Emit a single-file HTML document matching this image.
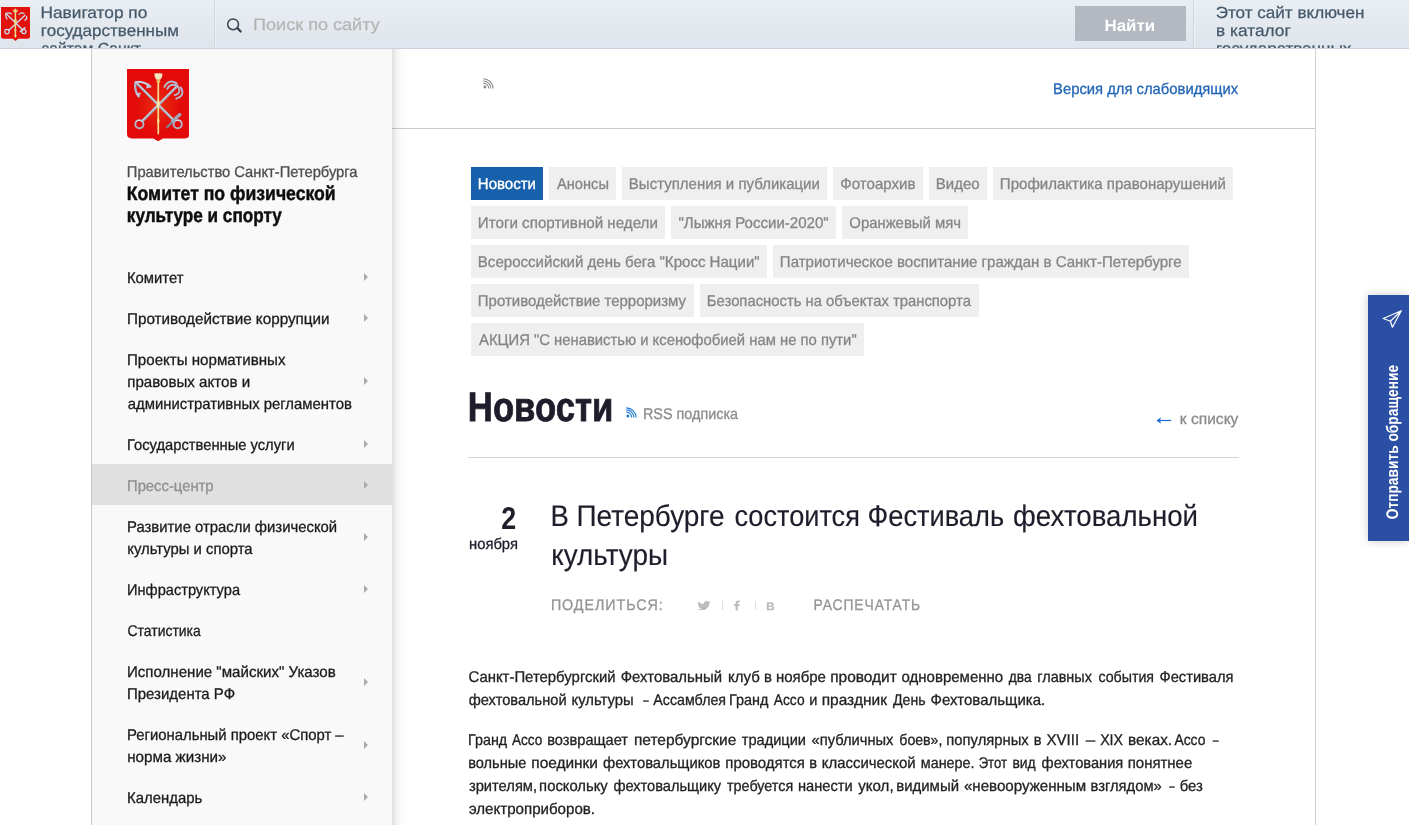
<!DOCTYPE html>
<html lang="ru">
<head>
<meta charset="utf-8">
<title>Новости</title>
<style>
*{box-sizing:border-box;margin:0;padding:0}
html,body{width:1409px;height:825px;overflow:hidden;background:#fff;font-family:"Liberation Sans",sans-serif}
.abs{position:absolute}
.t{position:absolute;left:0;top:0;text-rendering:geometricPrecision;white-space:nowrap;transform-origin:0 0;display:block}
#top{position:absolute;left:0;top:0;width:1409px;height:49px;background:linear-gradient(#e9eef3,#dfe5ec);border-bottom:1px solid #cbd3dc;overflow:hidden;z-index:6}
#top .sep{position:absolute;top:0;width:2px;height:48px;background:linear-gradient(90deg,#d0d7df 50%,#edf1f5 50%)}
#top .btn{position:absolute;left:1075px;top:6px;width:111px;height:35px;background:#b4b9c1}
#side{position:absolute;left:91px;top:48px;width:301px;height:777px;background:#f9f9f9;border-left:1px solid #c9c9c9;z-index:3}
#sideshadow{position:absolute;left:392px;top:48px;width:14px;height:777px;background:linear-gradient(90deg,rgba(0,0,0,.118),rgba(0,0,0,.09) 14%,rgba(0,0,0,.06) 28%,rgba(0,0,0,.04) 43%,rgba(0,0,0,.02) 64%,rgba(0,0,0,.008) 86%,rgba(0,0,0,0));z-index:2}
#sidetext{position:absolute;left:0;top:0;width:1409px;height:825px;z-index:4;will-change:transform}
.lay{position:absolute;left:0;top:0;width:1409px;height:825px;will-change:transform}
#act{position:absolute;left:0;top:416px;width:300px;height:41px;background:#e0e0e0}
.ar{position:absolute;left:272px;width:0;height:0;border-left:4px solid #ababab;border-top:4px solid transparent;border-bottom:4px solid transparent}
#vline{position:absolute;left:1315px;top:48px;width:1px;height:777px;background:#d2d2d2}
#hline{position:absolute;left:392px;top:128px;width:923px;height:1px;background:#cacaca}
.tag{position:absolute;height:33px;background:#efefef}
.tag.on{background:#1760ac}
</style>
</head>
<body>
<svg width="0" height="0" style="position:absolute">
  <defs>
    <radialGradient id="rg" cx="50%" cy="50%" r="36%"><stop offset="0" stop-color="#e92f10"/><stop offset="1" stop-color="#e20b0a"/></radialGradient>
    

  </defs>
</svg>

<div id="top">
  <svg class="abs" style="left:1.100px;top:7px;filter:drop-shadow(0 0 .6px rgba(255,255,255,.9))" width="29" height="34" viewBox="0 0 29 34">
      <path d="M0 0H29V29.800Q29 31.800 26.800 31.800H17.200L14.500 33.900L11.800 31.800H2.200Q0 31.800 0 29.800Z" fill="#e3110c"/>
      <g fill="none" stroke="#c6e2f6" stroke-linecap="round">
        <path d="M5.200 6.800L21.500 22.800M24 8.300L7.800 23.200" stroke-width="1.300"/>
        <circle cx="23" cy="24.600" r="2.100" stroke-width="1.200"/>
        <circle cx="6" cy="24.600" r="2.200" stroke-width="1.200"/>
        <path d="M6 12Q4 8.500 5 6.300Q8 5.300 10.500 7" stroke-width="1.200"/>
        <path d="M18 7.500Q20 5 23 6.500M25.500 9.500Q26.500 12 23.800 13.300" stroke-width="1.200"/>
        <path d="M19.300 24.500L23.800 20.800" stroke-width="1.500"/>
      </g>
      <path d="M14.400 2.200V30" stroke="#e7d98a" stroke-width="1.500" stroke-linecap="round"/>
      <path d="M14.400 10l1.500 4.300l-1.500 4.300l-1.500-4.300zM14.400 20.500l1.100 2.800l-1.100 2.800l-1.100-2.800zM12.800 28.300h3.200l-1.600 2.200z" fill="#e7d98a"/>
      <path d="M12 2.800l.9 2.300h3l.9-2.300l-1.300.9l-1.100-1.600l-1.100 1.600z" fill="#e7d98a" stroke="#e7d98a" stroke-width=".5"/>
    </svg>
  <div class="sep" style="left:214px"></div>
  <svg class="abs" style="left:225px;top:16px" width="20" height="18" viewBox="0 0 20 18"><circle cx="8.100" cy="8.300" r="5.400" fill="none" stroke="#3c434e" stroke-width="1.500"/><path d="M12.600 12.300L15.600 15.500" stroke="#3c434e" stroke-width="2.300" stroke-linecap="round"/></svg>
  <div class="btn"></div>
  <div class="sep" style="left:1193px"></div>
<div class="lay">
<span class="t" style="font-size:16.3px;line-height:23px;color:#44586a;transform:translate(40.45px,2.00px) scaleX(1.0618);-webkit-text-stroke:0.25px #44586a">Навигатор по</span>
<span class="t" style="font-size:16.3px;line-height:23px;color:#44586a;transform:translate(40.83px,20.00px) scaleX(1.0461);-webkit-text-stroke:0.25px #44586a">государственным</span>
<span class="t" style="font-size:16.3px;line-height:23px;color:#44586a;transform:translate(41.31px,38.00px) scaleX(0.9671);-webkit-text-stroke:0.25px #44586a">сайтам Санкт-</span>
<span class="t" style="font-size:16.5px;line-height:23px;color:#b5b4b3;transform:translate(253.09px,14.00px) scaleX(1.0949);-webkit-text-stroke:0.25px #b5b4b3">Поиск по сайту</span>
<span class="t" style="font-size:16.3px;line-height:23px;color:#ffffff;transform:translate(1104.44px,15.00px) scaleX(1.0399);font-weight:bold">Найти</span>
<span class="t" style="font-size:16.3px;line-height:23px;color:#44586a;transform:translate(1215.70px,2.00px) scaleX(1.0489);-webkit-text-stroke:0.25px #44586a">Этот сайт включен</span>
<span class="t" style="font-size:16.3px;line-height:23px;color:#44586a;transform:translate(1216.12px,20.00px) scaleX(1.0597);-webkit-text-stroke:0.25px #44586a">в каталог</span>
<span class="t" style="font-size:16.3px;line-height:23px;color:#44586a;transform:translate(1215.93px,38.00px) scaleX(1.0503);-webkit-text-stroke:0.25px #44586a">государственных</span>
</div>
</div>

<div id="sideshadow"></div>
<div id="side">
  <svg class="abs" style="left:35px;top:20.8px" width="62.4" height="72.2" viewBox="0 0 62.4 72">
      <path d="M0 0H62.4V65Q62.4 69.300 57.500 69.300H36L31.200 72.200L26.400 69.300H4.900Q0 69.300 0 65Z" fill="url(#rg)"/>
      <g fill="none" stroke-linecap="round" stroke-linejoin="round">
        <!-- sea anchor -->
        <path d="M9.500 14L47.300 51.700" stroke="#a4acbf" stroke-width="2.500"/>
        <path d="M9.500 13.400L47.300 51.100" stroke="#dfe3eb" stroke-width=".9"/>
        <path d="M11.500 27.300Q7 20.500 8.500 13.200Q16 11.600 23.300 17.500" stroke="#aeb6c7" stroke-width="2.300"/>
        <path d="M8.400 12.900Q15.500 11.300 22.500 16.300" stroke="#e3e6ee" stroke-width=".9"/>
        <path d="M11.700 27.800l-3-3.400l4.700-.5zM23.800 17.700l-4.300 1.400l1-4.800z" fill="#c3c9d6" stroke="#c3c9d6" stroke-width=".6"/>
        <circle cx="50.700" cy="55.100" r="4.100" stroke="#aeb6c7" stroke-width="1.900"/>
        <path d="M47.500 52.300a4.100 4.100 0 0 1 6.500 .4" stroke="#e3e6ee" stroke-width=".9"/>
        <path d="M40.100 58.200L52.600 45.600" stroke="#7c8598" stroke-width="2.300"/>
        <path d="M45.500 52L52.800 45.400" stroke="#a2a9b8" stroke-width="3.200"/>
        <!-- grapnel -->
        <path d="M50.500 16.800L15.400 52" stroke="#a4acbf" stroke-width="2.500"/>
        <path d="M50.100 16.300L15 51.500" stroke="#dfe3eb" stroke-width=".9"/>
        <path d="M49.700 14.300Q42 9.300 37.400 17.800M50.200 16.900Q44 13.300 40.300 19.600" stroke="#b3bbca" stroke-width="1.900"/>
        <path d="M53.600 18.300Q58.800 26 49.300 29.600M51.200 17.800Q54.800 24.200 47.700 26.100" stroke="#b3bbca" stroke-width="1.900"/>
        <circle cx="12.400" cy="55.100" r="4.100" stroke="#aeb6c7" stroke-width="1.900"/>
        <path d="M9.200 52.500a4.100 4.100 0 0 1 6.300 .1" stroke="#e3e6ee" stroke-width=".9"/>
      </g>
      <!-- scepter -->
      <path d="M31.300 11V64.500" stroke="#f0cc6c" stroke-width="1.700" stroke-linecap="round"/>
      <path d="M31.300 11V64.500" stroke="#fbeec4" stroke-width=".6" stroke-linecap="round"/>
      <path d="M31.300 28.500l1.800 6.500l-1.800 6.500l-1.800-6.500z" fill="#f7e3a2"/>
      <path d="M31.300 47l1.300 5l-1.300 5l-1.300-5z" fill="#f3d88a"/>
      <path d="M27.400 5.500Q27.200 3.800 29 4.400Q30.200 3.400 31.400 4.600Q32.600 3.400 33.800 4.400Q35.600 3.800 35.400 5.500Q35.600 8.500 33.300 10.600H29.500Q27.200 8.500 27.400 5.500Z" fill="#f5e6bd"/>
      <circle cx="31.400" cy="12.200" r="1.900" fill="#e8bd5c"/>
    </svg>
  <div id="act"></div>
  <div class="ar" style="top:225px"></div>
  <div class="ar" style="top:266px"></div>
  <div class="ar" style="top:329px"></div>
  <div class="ar" style="top:392px"></div>
  <div class="ar" style="top:433px"></div>
  <div class="ar" style="top:485px"></div>
  <div class="ar" style="top:537px"></div>
  <div class="ar" style="top:630px"></div>
  <div class="ar" style="top:693px"></div>
  <div class="ar" style="top:745px"></div>
</div>
<div id="sidetext">
<span class="t" style="font-size:15.5px;line-height:22px;color:#4d4d4d;transform:translate(126.85px,162.00px) scaleX(0.9488);-webkit-text-stroke:0.3px #4d4d4d">Правительство Санкт-Петербурга</span>
<span class="t" style="font-size:19.8px;line-height:28px;color:#0d0d0d;transform:translate(126.80px,180.00px) scaleX(0.8912);font-weight:bold;-webkit-text-stroke:0.45px #0d0d0d">Комитет по физической</span>
<span class="t" style="font-size:19.8px;line-height:28px;color:#0d0d0d;transform:translate(126.83px,202.00px) scaleX(0.8669);font-weight:bold;-webkit-text-stroke:0.45px #0d0d0d">культуре и спорту</span>
<span class="t" style="font-size:15.5px;line-height:22px;color:#1a1a1a;transform:translate(126.99px,268.00px) scaleX(0.9558);-webkit-text-stroke:0.3px #1a1a1a">Комитет</span>
<span class="t" style="font-size:15.5px;line-height:22px;color:#1a1a1a;transform:translate(126.96px,309.00px) scaleX(0.9831);-webkit-text-stroke:0.3px #1a1a1a">Противодействие коррупции</span>
<span class="t" style="font-size:15.5px;line-height:22px;color:#1a1a1a;transform:translate(126.97px,350.00px) scaleX(0.9745);-webkit-text-stroke:0.3px #1a1a1a">Проекты нормативных</span>
<span class="t" style="font-size:15.5px;line-height:22px;color:#1a1a1a;transform:translate(127.21px,372.00px) scaleX(0.9747);-webkit-text-stroke:0.3px #1a1a1a">правовых актов и</span>
<span class="t" style="font-size:15.5px;line-height:22px;color:#1a1a1a;transform:translate(127.69px,394.00px) scaleX(0.9600);-webkit-text-stroke:0.3px #1a1a1a">административных регламентов</span>
<span class="t" style="font-size:15.5px;line-height:22px;color:#1a1a1a;transform:translate(127.00px,435.00px) scaleX(0.9505);-webkit-text-stroke:0.3px #1a1a1a">Государственные услуги</span>
<span class="t" style="font-size:15.5px;line-height:22px;color:#8f8f8f;transform:translate(126.99px,476.00px) scaleX(0.9554);-webkit-text-stroke:0.3px #8f8f8f">Пресс-центр</span>
<span class="t" style="font-size:15.5px;line-height:22px;color:#1a1a1a;transform:translate(126.99px,517.00px) scaleX(0.9589);-webkit-text-stroke:0.3px #1a1a1a">Развитие отрасли физической</span>
<span class="t" style="font-size:15.5px;line-height:22px;color:#1a1a1a;transform:translate(127.22px,539.00px) scaleX(0.9590);-webkit-text-stroke:0.3px #1a1a1a">культуры и спорта</span>
<span class="t" style="font-size:15.5px;line-height:22px;color:#1a1a1a;transform:translate(127.01px,580.00px) scaleX(0.9434);-webkit-text-stroke:0.3px #1a1a1a">Инфраструктура</span>
<span class="t" style="font-size:15.5px;line-height:22px;color:#1a1a1a;transform:translate(127.50px,621.00px) scaleX(0.8994);-webkit-text-stroke:0.3px #1a1a1a">Статистика</span>
<span class="t" style="font-size:15.5px;line-height:22px;color:#1a1a1a;transform:translate(126.97px,662.00px) scaleX(0.9724);-webkit-text-stroke:0.3px #1a1a1a">Исполнение "майских" Указов</span>
<span class="t" style="font-size:15.5px;line-height:22px;color:#1a1a1a;transform:translate(126.98px,684.00px) scaleX(0.9664);-webkit-text-stroke:0.3px #1a1a1a">Президента РФ</span>
<span class="t" style="font-size:15.5px;line-height:22px;color:#1a1a1a;transform:translate(126.99px,725.00px) scaleX(0.9588);-webkit-text-stroke:0.3px #1a1a1a">Региональный проект «Спорт –</span>
<span class="t" style="font-size:15.5px;line-height:22px;color:#1a1a1a;transform:translate(127.20px,747.00px) scaleX(0.9799);-webkit-text-stroke:0.3px #1a1a1a">норма жизни»</span>
<span class="t" style="font-size:15.5px;line-height:22px;color:#1a1a1a;transform:translate(126.99px,788.00px) scaleX(0.9620);-webkit-text-stroke:0.3px #1a1a1a">Календарь</span>
</div>

<div id="vline"></div>
<div id="hline"></div>

<!-- small grey rss -->
<svg class="abs" style="left:483.300px;top:78.100px;overflow:visible" width="11" height="11" viewBox="0 0 11 11"><g fill="none" stroke="#8a8a8a" stroke-width="1.050"><path d="M.3 5.100A5.400 5.400 0 0 1 5.700 10.500"/><path d="M.3 2.900A7.600 7.600 0 0 1 7.900 10.500"/><path d="M.3 .8A9.700 9.700 0 0 1 10 10.500"/></g><circle cx="1.900" cy="9" r="1.450" fill="#8a8a8a"/></svg>

<div class="tag on" style="left:471px;top:167px;width:72px"></div>
<div class="tag" style="left:549px;top:167px;width:67px"></div>
<div class="tag" style="left:622px;top:167px;width:205px"></div>
<div class="tag" style="left:833px;top:167px;width:90px"></div>
<div class="tag" style="left:929px;top:167px;width:58px"></div>
<div class="tag" style="left:993px;top:167px;width:240px"></div>
<div class="tag" style="left:471px;top:206px;width:194px"></div>
<div class="tag" style="left:671px;top:206px;width:165px"></div>
<div class="tag" style="left:842px;top:206px;width:126px"></div>
<div class="tag" style="left:471px;top:245px;width:296px"></div>
<div class="tag" style="left:773px;top:245px;width:416px"></div>
<div class="tag" style="left:471px;top:284px;width:223px"></div>
<div class="tag" style="left:700px;top:284px;width:279px"></div>
<div class="tag" style="left:471px;top:323px;width:393px"></div>

<!-- blue rss -->
<svg class="abs" style="left:626.300px;top:407.100px;overflow:visible" width="11" height="11" viewBox="0 0 11 11"><g fill="none" stroke="#1f7bd6" stroke-width="1.15"><path d="M.3 5.100A5.400 5.400 0 0 1 5.700 10.500"/><path d="M.3 2.900A7.600 7.600 0 0 1 7.900 10.500"/><path d="M.3 .8A9.700 9.700 0 0 1 10 10.500"/></g><circle cx="1.900" cy="9" r="1.500" fill="#1f7bd6"/></svg>
<!-- back arrow -->
<svg class="abs" style="left:1156px;top:416px" width="16" height="9" viewBox="0 0 16 9"><path d="M1.2 4.5H15.2" stroke="#1c6fd0" stroke-width="1.2"/><path d="M.6 4.5L5 1.2L4 4.5L5 7.8Z" fill="#1c6fd0"/></svg>
<div class="abs" style="left:468px;top:457px;width:771px;height:1px;background:#d3d3d3"></div>

<!-- share icons -->
<svg class="abs" style="left:697.200px;top:600.500px" width="14" height="9.600" viewBox="0.600 0.300 13.800 11" preserveAspectRatio="none"><path d="M14.2 1.6c-.5.3-1 .4-1.6.5.6-.4 1-.9 1.2-1.5-.5.3-1.100.6-1.700.7C11.600.7 10.900.4 10.100.4 8.600.4 7.400 1.600 7.400 3.100c0 .2 0 .4.100.6C5.200 3.600 3.200 2.500 1.800.8c-.2.400-.4.900-.4 1.400 0 .9.500 1.800 1.200 2.300-.4 0-.9-.1-1.200-.3 0 1.300.9 2.400 2.200 2.700-.4.100-.8.100-1.200 0 .3 1.100 1.300 1.900 2.500 1.900C3.800 9.700 2.400 10.200.8 10c1.200.8 2.600 1.200 4.100 1.200 5 0 7.700-4.100 7.700-7.700v-.4c.6-.4 1.100-.9 1.600-1.500z" fill="#bcbcbc"/></svg>
<div class="abs" style="left:722px;top:601px;width:1px;height:9px;background:#dedede"></div>
<svg class="abs" style="left:733px;top:600px" width="9" height="11" viewBox="0 0 9 11"><path d="M2.600 10.400V6.100H.9V4.300H2.600V3.200C2.600 1.500 3.600.6 5.200.6c.7 0 1.400.1 1.600.1V2.400H5.800c-.8 0-1 .4-1 1v.9h2l-.3 1.800H4.800v4.300z" fill="#bcbcbc"/></svg>
<div class="abs" style="left:755px;top:601px;width:1px;height:9px;background:#dedede"></div>
<svg class="abs" style="left:765.500px;top:602px" width="10" height="9" viewBox="0 0 10 9"><path d="M.8.3H5.200c1.700 0 2.600.7 2.600 2 0 .8-.4 1.400-1.200 1.700 1 .2 1.600.9 1.600 1.900 0 1.500-1.100 2.300-2.900 2.300H.8zM2.800 1.800v1.600H4.600c.7 0 1.100-.3 1.100-.8s-.4-.8-1.100-.8zm0 3V6.700H4.900c.8 0 1.200-.3 1.200-1s-.4-1-1.200-1z" fill="#bcbcbc"/></svg>

<div class="lay">
<span class="t" style="font-size:15.5px;line-height:22px;color:#2266b6;transform:translate(1053.04px,79.00px) scaleX(0.9550);-webkit-text-stroke:0.3px #2266b6">Версия для слабовидящих</span>
<span class="t" style="font-size:15.5px;line-height:22px;color:#ffffff;transform:translate(477.83px,174.00px) scaleX(0.9675);-webkit-text-stroke:0.35px #ffffff">Новости</span>
<span class="t" style="font-size:15.5px;line-height:22px;color:#858585;transform:translate(557.00px,174.00px) scaleX(0.9444);-webkit-text-stroke:0.3px #858585">Анонсы</span>
<span class="t" style="font-size:15.5px;line-height:22px;color:#858585;transform:translate(628.83px,174.00px) scaleX(0.9682);-webkit-text-stroke:0.3px #858585">Выступления и публикации</span>
<span class="t" style="font-size:15.5px;line-height:22px;color:#858585;transform:translate(840.29px,174.00px) scaleX(0.9723);-webkit-text-stroke:0.3px #858585">Фотоархив</span>
<span class="t" style="font-size:15.5px;line-height:22px;color:#858585;transform:translate(935.83px,174.00px) scaleX(0.9668);-webkit-text-stroke:0.3px #858585">Видео</span>
<span class="t" style="font-size:15.5px;line-height:22px;color:#858585;transform:translate(999.82px,174.00px) scaleX(0.9709);-webkit-text-stroke:0.3px #858585">Профилактика правонарушений</span>
<span class="t" style="font-size:15.5px;line-height:22px;color:#858585;transform:translate(477.82px,213.00px) scaleX(0.9777);-webkit-text-stroke:0.3px #858585">Итоги спортивной недели</span>
<span class="t" style="font-size:15.5px;line-height:22px;color:#858585;transform:translate(678.53px,213.00px) scaleX(0.9704);-webkit-text-stroke:0.3px #858585">"Лыжня России-2020"</span>
<span class="t" style="font-size:15.5px;line-height:22px;color:#858585;transform:translate(849.30px,213.00px) scaleX(0.9604);-webkit-text-stroke:0.3px #858585">Оранжевый мяч</span>
<span class="t" style="font-size:15.5px;line-height:22px;color:#858585;transform:translate(477.82px,252.00px) scaleX(0.9712);-webkit-text-stroke:0.3px #858585">Всероссийский день бега "Кросс Нации"</span>
<span class="t" style="font-size:15.5px;line-height:22px;color:#858585;transform:translate(779.83px,252.00px) scaleX(0.9702);-webkit-text-stroke:0.3px #858585">Патриотическое воспитание граждан в Санкт-Петербурге</span>
<span class="t" style="font-size:15.5px;line-height:22px;color:#858585;transform:translate(477.83px,291.00px) scaleX(0.9660);-webkit-text-stroke:0.3px #858585">Противодействие терроризму</span>
<span class="t" style="font-size:15.5px;line-height:22px;color:#858585;transform:translate(706.84px,291.00px) scaleX(0.9567);-webkit-text-stroke:0.3px #858585">Безопасность на объектах транспорта</span>
<span class="t" style="font-size:15.5px;line-height:22px;color:#858585;transform:translate(479.00px,330.00px) scaleX(0.9563);-webkit-text-stroke:0.3px #858585">АКЦИЯ "С ненавистью и ксенофобией нам не по пути"</span>
<span class="t" style="font-size:41.2px;line-height:58px;color:#1d1d2b;transform:translate(467.83px,378.00px) scaleX(0.8424);font-weight:bold;-webkit-text-stroke:0.8px #1d1d2b">Новости</span>
<span class="t" style="font-size:15.5px;line-height:22px;color:#8b8b8b;transform:translate(642.93px,404.00px) scaleX(0.9282);-webkit-text-stroke:0.3px #8b8b8b">RSS подписка</span>
<span class="t" style="font-size:15.5px;line-height:22px;color:#8b8b8b;transform:translate(1179.83px,409.00px) scaleX(1.0039);-webkit-text-stroke:0.3px #8b8b8b">к списку</span>
<span class="t" style="font-size:31.5px;line-height:44px;color:#1d1d2b;transform:translate(501.36px,496.00px) scaleX(0.8508);font-weight:bold">2</span>
<span class="t" style="font-size:15.5px;line-height:22px;color:#1d1d2b;transform:translate(468.98px,534.00px) scaleX(0.9548);-webkit-text-stroke:0.3px #1d1d2b">ноября</span>
<span class="t" style="font-size:29.8px;line-height:42px;color:#1d1d2b;transform:translate(550.43px,496.00px) scaleX(0.9227);-webkit-text-stroke:0.15px #1d1d2b">В</span>
<span class="t" style="font-size:29.8px;line-height:42px;color:#1d1d2b;transform:translate(576.41px,496.00px) scaleX(0.9386);-webkit-text-stroke:0.15px #1d1d2b">Петербурге</span>
<span class="t" style="font-size:29.8px;line-height:42px;color:#1d1d2b;transform:translate(734.45px,496.00px) scaleX(0.9114);-webkit-text-stroke:0.15px #1d1d2b">состоится</span>
<span class="t" style="font-size:29.8px;line-height:42px;color:#1d1d2b;transform:translate(867.52px,496.00px) scaleX(0.9141);-webkit-text-stroke:0.15px #1d1d2b">Фестиваль</span>
<span class="t" style="font-size:29.8px;line-height:42px;color:#1d1d2b;transform:translate(1013.04px,496.00px) scaleX(0.9265);-webkit-text-stroke:0.15px #1d1d2b">фехтовальной</span>
<span class="t" style="font-size:29.8px;line-height:42px;color:#1d1d2b;transform:translate(551.26px,535.00px) scaleX(0.9354);-webkit-text-stroke:0.15px #1d1d2b">культуры</span>
<span class="t" style="font-size:15.3px;line-height:21px;color:#949494;transform:translate(550.88px,595.00px) scaleX(0.9351);letter-spacing:1px;-webkit-text-stroke:0.3px #949494">ПОДЕЛИТЬСЯ:</span>
<span class="t" style="font-size:15.3px;line-height:21px;color:#949494;transform:translate(813.52px,595.00px) scaleX(0.9056);letter-spacing:1px;-webkit-text-stroke:0.3px #949494">РАСПЕЧАТАТЬ</span>
<span class="t" style="font-size:15.5px;line-height:22px;color:#222222;transform:translate(468.45px,667.00px) scaleX(0.9615);-webkit-text-stroke:0.3px #222222">Санкт-Петербургский</span>
<span class="t" style="font-size:15.5px;line-height:22px;color:#222222;transform:translate(620.75px,667.00px) scaleX(0.9613);-webkit-text-stroke:0.3px #222222">Фехтовальный</span>
<span class="t" style="font-size:15.5px;line-height:22px;color:#222222;transform:translate(728.01px,667.00px) scaleX(0.9683);-webkit-text-stroke:0.3px #222222">клуб</span>
<span class="t" style="font-size:15.5px;line-height:22px;color:#222222;transform:translate(763.92px,667.00px) scaleX(0.9579);-webkit-text-stroke:0.3px #222222">в</span>
<span class="t" style="font-size:15.5px;line-height:22px;color:#222222;transform:translate(775.91px,667.00px) scaleX(0.9682);-webkit-text-stroke:0.3px #222222">ноябре</span>
<span class="t" style="font-size:15.5px;line-height:22px;color:#222222;transform:translate(830.18px,667.00px) scaleX(0.9965);-webkit-text-stroke:0.3px #222222">проводит</span>
<span class="t" style="font-size:15.5px;line-height:22px;color:#222222;transform:translate(901.58px,667.00px) scaleX(0.9674);-webkit-text-stroke:0.3px #222222">одновременно</span>
<span class="t" style="font-size:15.5px;line-height:22px;color:#222222;transform:translate(1008.85px,667.00px) scaleX(0.8868);-webkit-text-stroke:0.3px #222222">два</span>
<span class="t" style="font-size:15.5px;line-height:22px;color:#222222;transform:translate(1037.25px,667.00px) scaleX(0.9325);-webkit-text-stroke:0.3px #222222">главных</span>
<span class="t" style="font-size:15.5px;line-height:22px;color:#222222;transform:translate(1098.41px,667.00px) scaleX(0.9167);-webkit-text-stroke:0.3px #222222">события</span>
<span class="t" style="font-size:15.5px;line-height:22px;color:#222222;transform:translate(1159.46px,667.00px) scaleX(0.9487);-webkit-text-stroke:0.3px #222222">Фестиваля</span>
<span class="t" style="font-size:15.5px;line-height:22px;color:#222222;transform:translate(468.69px,690.00px) scaleX(0.9434);-webkit-text-stroke:0.3px #222222">фехтовальной</span>
<span class="t" style="font-size:15.5px;line-height:22px;color:#222222;transform:translate(571.52px,690.00px) scaleX(0.9564);-webkit-text-stroke:0.3px #222222">культуры</span>
<span class="t" style="font-size:15.5px;line-height:22px;color:#222222;transform:translate(643.35px,690.00px) scaleX(0.6308);-webkit-text-stroke:0.3px #222222">–</span>
<span class="t" style="font-size:15.5px;line-height:22px;color:#222222;transform:translate(653.35px,690.00px) scaleX(0.9183);-webkit-text-stroke:0.3px #222222">Ассамблея</span>
<span class="t" style="font-size:15.5px;line-height:22px;color:#222222;transform:translate(729.02px,690.00px) scaleX(0.9300);-webkit-text-stroke:0.3px #222222">Гранд</span>
<span class="t" style="font-size:15.5px;line-height:22px;color:#222222;transform:translate(773.75px,690.00px) scaleX(0.8911);-webkit-text-stroke:0.3px #222222">Ассо</span>
<span class="t" style="font-size:15.5px;line-height:22px;color:#222222;transform:translate(809.25px,690.00px) scaleX(0.9399);-webkit-text-stroke:0.3px #222222">и</span>
<span class="t" style="font-size:15.5px;line-height:22px;color:#222222;transform:translate(821.68px,690.00px) scaleX(0.9993);-webkit-text-stroke:0.3px #222222">праздник</span>
<span class="t" style="font-size:15.5px;line-height:22px;color:#222222;transform:translate(892.95px,690.00px) scaleX(0.9123);-webkit-text-stroke:0.3px #222222">День</span>
<span class="t" style="font-size:15.5px;line-height:22px;color:#222222;transform:translate(930.55px,690.00px) scaleX(0.9680);-webkit-text-stroke:0.3px #222222">Фехтовальщика.</span>
<span class="t" style="font-size:15.5px;line-height:22px;color:#222222;transform:translate(468.03px,730.00px) scaleX(0.9227);-webkit-text-stroke:0.3px #222222">Гранд</span>
<span class="t" style="font-size:15.5px;line-height:22px;color:#222222;transform:translate(511.95px,730.00px) scaleX(0.8764);-webkit-text-stroke:0.3px #222222">Ассо</span>
<span class="t" style="font-size:15.5px;line-height:22px;color:#222222;transform:translate(547.24px,730.00px) scaleX(0.9430);-webkit-text-stroke:0.3px #222222">возвращает</span>
<span class="t" style="font-size:15.5px;line-height:22px;color:#222222;transform:translate(633.88px,730.00px) scaleX(0.9998);-webkit-text-stroke:0.3px #222222">петербургские</span>
<span class="t" style="font-size:15.5px;line-height:22px;color:#222222;transform:translate(741.72px,730.00px) scaleX(0.9421);-webkit-text-stroke:0.3px #222222">традиции</span>
<span class="t" style="font-size:15.5px;line-height:22px;color:#222222;transform:translate(811.59px,730.00px) scaleX(0.9480);-webkit-text-stroke:0.3px #222222">«публичных</span>
<span class="t" style="font-size:15.5px;line-height:22px;color:#222222;transform:translate(899.29px,730.00px) scaleX(0.9120);-webkit-text-stroke:0.3px #222222">боев»,</span>
<span class="t" style="font-size:15.5px;line-height:22px;color:#222222;transform:translate(946.33px,730.00px) scaleX(0.9548);-webkit-text-stroke:0.3px #222222">популярных</span>
<span class="t" style="font-size:15.5px;line-height:22px;color:#222222;transform:translate(1033.80px,730.00px) scaleX(0.9412);-webkit-text-stroke:0.3px #222222">в</span>
<span class="t" style="font-size:15.5px;line-height:22px;color:#222222;transform:translate(1046.52px,730.00px) scaleX(0.9702);-webkit-text-stroke:0.3px #222222">XVIII</span>
<span class="t" style="font-size:15.5px;line-height:22px;color:#222222;transform:translate(1085.65px,730.00px) scaleX(0.6129);-webkit-text-stroke:0.3px #222222">—</span>
<span class="t" style="font-size:15.5px;line-height:22px;color:#222222;transform:translate(1100.13px,730.00px) scaleX(0.9156);-webkit-text-stroke:0.3px #222222">XIX</span>
<span class="t" style="font-size:15.5px;line-height:22px;color:#222222;transform:translate(1128.09px,730.00px) scaleX(0.9903);-webkit-text-stroke:0.3px #222222">веках.</span>
<span class="t" style="font-size:15.5px;line-height:22px;color:#222222;transform:translate(1174.45px,730.00px) scaleX(0.8940);-webkit-text-stroke:0.3px #222222">Ассо</span>
<span class="t" style="font-size:15.5px;line-height:22px;color:#222222;transform:translate(1212.75px,730.00px) scaleX(0.6767);-webkit-text-stroke:0.3px #222222">–</span>
<span class="t" style="font-size:15.5px;line-height:22px;color:#222222;transform:translate(468.24px,753.00px) scaleX(0.9405);-webkit-text-stroke:0.3px #222222">вольные</span>
<span class="t" style="font-size:15.5px;line-height:22px;color:#222222;transform:translate(531.29px,753.00px) scaleX(0.9951);-webkit-text-stroke:0.3px #222222">поединки</span>
<span class="t" style="font-size:15.5px;line-height:22px;color:#222222;transform:translate(603.09px,753.00px) scaleX(0.9525);-webkit-text-stroke:0.3px #222222">фехтовальщиков</span>
<span class="t" style="font-size:15.5px;line-height:22px;color:#222222;transform:translate(725.32px,753.00px) scaleX(0.9650);-webkit-text-stroke:0.3px #222222">проводятся</span>
<span class="t" style="font-size:15.5px;line-height:22px;color:#222222;transform:translate(809.28px,753.00px) scaleX(0.9444);-webkit-text-stroke:0.3px #222222">в</span>
<span class="t" style="font-size:15.5px;line-height:22px;color:#222222;transform:translate(821.72px,753.00px) scaleX(0.9636);-webkit-text-stroke:0.3px #222222">классической</span>
<span class="t" style="font-size:15.5px;line-height:22px;color:#222222;transform:translate(920.75px,753.00px) scaleX(0.9275);-webkit-text-stroke:0.3px #222222">манере.</span>
<span class="t" style="font-size:15.5px;line-height:22px;color:#222222;transform:translate(978.64px,753.00px) scaleX(0.8455);-webkit-text-stroke:0.3px #222222">Этот</span>
<span class="t" style="font-size:15.5px;line-height:22px;color:#222222;transform:translate(1012.38px,753.00px) scaleX(0.8961);-webkit-text-stroke:0.3px #222222">вид</span>
<span class="t" style="font-size:15.5px;line-height:22px;color:#222222;transform:translate(1041.59px,753.00px) scaleX(0.9450);-webkit-text-stroke:0.3px #222222">фехтования</span>
<span class="t" style="font-size:15.5px;line-height:22px;color:#222222;transform:translate(1127.71px,753.00px) scaleX(0.9652);-webkit-text-stroke:0.3px #222222">понятнее</span>
<span class="t" style="font-size:15.5px;line-height:22px;color:#222222;transform:translate(468.92px,776.00px) scaleX(0.9486);-webkit-text-stroke:0.3px #222222">зрителям,</span>
<span class="t" style="font-size:15.5px;line-height:22px;color:#222222;transform:translate(539.12px,776.00px) scaleX(0.9555);-webkit-text-stroke:0.3px #222222">поскольку</span>
<span class="t" style="font-size:15.5px;line-height:22px;color:#222222;transform:translate(613.49px,776.00px) scaleX(0.9438);-webkit-text-stroke:0.3px #222222">фехтовальщику</span>
<span class="t" style="font-size:15.5px;line-height:22px;color:#222222;transform:translate(727.03px,776.00px) scaleX(0.9257);-webkit-text-stroke:0.3px #222222">требуется</span>
<span class="t" style="font-size:15.5px;line-height:22px;color:#222222;transform:translate(797.93px,776.00px) scaleX(0.9484);-webkit-text-stroke:0.3px #222222">нанести</span>
<span class="t" style="font-size:15.5px;line-height:22px;color:#222222;transform:translate(858.25px,776.00px) scaleX(0.9722);-webkit-text-stroke:0.3px #222222">укол,</span>
<span class="t" style="font-size:15.5px;line-height:22px;color:#222222;transform:translate(896.21px,776.00px) scaleX(0.9656);-webkit-text-stroke:0.3px #222222">видимый</span>
<span class="t" style="font-size:15.5px;line-height:22px;color:#222222;transform:translate(963.88px,776.00px) scaleX(0.9748);-webkit-text-stroke:0.3px #222222">«невооруженным</span>
<span class="t" style="font-size:15.5px;line-height:22px;color:#222222;transform:translate(1090.53px,776.00px) scaleX(0.9514);-webkit-text-stroke:0.3px #222222">взглядом»</span>
<span class="t" style="font-size:15.5px;line-height:22px;color:#222222;transform:translate(1169.15px,776.00px) scaleX(0.6194);-webkit-text-stroke:0.3px #222222">–</span>
<span class="t" style="font-size:15.5px;line-height:22px;color:#222222;transform:translate(1179.76px,776.00px) scaleX(0.9563);-webkit-text-stroke:0.3px #222222">без</span>
<span class="t" style="font-size:15.5px;line-height:22px;color:#222222;transform:translate(468.91px,799.00px) scaleX(0.9739);-webkit-text-stroke:0.3px #222222">электроприборов.</span>
</div>

<!-- side widget -->
<div class="abs" style="left:1368px;top:295px;width:41px;height:246px;background:#2a4fa4;box-shadow:0 0 9px rgba(0,0,0,.2);z-index:5">
  <svg class="abs" style="left:12px;top:12px" width="26" height="24" viewBox="0 0 26 24"><path d="M21.300 3.700L3.300 11.500L10.400 14.200L12.400 20.200Z M10.400 14.200L21.300 3.700" fill="none" stroke="#fff" stroke-width="1.2" stroke-linejoin="round"/></svg>
  <span class="t" style="left:0;top:0;font-size:16.800px;line-height:20px;font-weight:bold;color:#fff;transform-origin:0 0;transform:translate(15px,224.300px) rotate(-90deg) scaleX(.82)">Отправить обращение</span>
</div>
</body>
</html>
